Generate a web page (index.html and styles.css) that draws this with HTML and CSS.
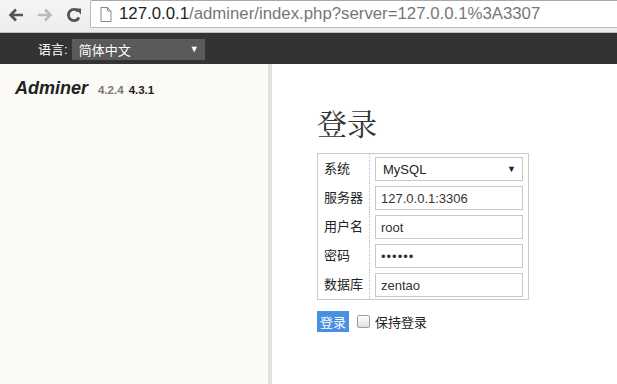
FILE: index.html
```html
<!DOCTYPE html>
<html lang="zh">
<head>
    <meta charset="UTF-8">
    <title>登录 - Adminer</title>
    <link rel="stylesheet" href="styles.css">
</head>
<body>
    <div class="chrome">
        <div class="nav-buttons">
            <svg class="nav-icon" width="18" height="18" viewBox="0 0 18 18"><path d="M16 9H4M9 3.5L3.5 9 9 14.5" fill="none" stroke="#555" stroke-width="2.6"/></svg>
            <svg class="nav-icon" width="18" height="18" viewBox="0 0 18 18"><path d="M2 9h12M9 3.5L14.5 9 9 14.5" fill="none" stroke="#bbb" stroke-width="2.6"/></svg>
            <svg class="nav-icon" width="18" height="18" viewBox="0 0 18 18"><path d="M14 11.5A5.6 5.6 0 1 1 13.2 5.2" fill="none" stroke="#555" stroke-width="2.8"/><path d="M10 2.5h6v6z" fill="#555"/></svg>
        </div>
        <div class="omnibox">
            <svg class="page-icon" width="12" height="15" viewBox="0 0 12 15"><path d="M1 .5h6.5l3.5 3.5v10.5H1z" fill="#fff" stroke="#888"/><path d="M7.5 .5V4H11" fill="none" stroke="#888"/></svg>
            <span class="host">127.0.0.1</span><span class="path">/adminer/index.php?server=127.0.0.1%3A3307</span>
        </div>
    </div>

    <div class="lang-bar">
        <label for="lang">语言:</label>
        <div class="lang-select">
            <span>简体中文</span>
            <span class="arrow">▼</span>
        </div>
    </div>

    <div class="page">
        <div class="menu">
            <h1><a href="#">Adminer</a> <span class="version">4.2.4</span> <span class="new-version">4.3.1</span></h1>
        </div>

        <div class="content">
            <h2>登录</h2>
            <form class="login">
                <table>
                    <tr>
                        <th>系统</th>
                        <td><div class="fake-select"><span>MySQL</span><span class="arrow">▼</span></div></td>
                    </tr>
                    <tr>
                        <th>服务器</th>
                        <td><input type="text" value="127.0.0.1:3306"></td>
                    </tr>
                    <tr>
                        <th>用户名</th>
                        <td><input type="text" value="root"></td>
                    </tr>
                    <tr>
                        <th>密码</th>
                        <td><input type="text" class="pass" value="••••••"></td>
                    </tr>
                    <tr>
                        <th>数据库</th>
                        <td><input type="text" value="zentao"></td>
                    </tr>
                </table>
                <div class="actions">
                    <button type="button">登录</button>
                    <label class="remember"><span class="checkbox"></span>保持登录</label>
                </div>
            </form>
        </div>
    </div>
</body>
</html>
```

FILE: styles.css
```css
body {
    margin: 0;
    font-family: "Liberation Sans", Arial, "Noto Sans CJK SC", sans-serif;
    font-size: 13px;
    color: #000;
    background: #fff;
    height: 384px;
    overflow: hidden;
    display: flex;
    flex-direction: column;
}
.chrome {
    height: 33px;
    box-sizing: border-box;
    background: linear-gradient(#f6f6f6, #ececec);
    border-bottom: 1px solid #bdbdbd;
    display: flex;
    align-items: flex-start;
    flex-shrink: 0;
}
.nav-buttons {
    display: flex;
    gap: 11px;
    padding: 6px 0 0 7px;
    width: 84px;
    box-sizing: border-box;
}
.omnibox {
    flex: 1;
    height: 28px;
    box-sizing: border-box;
    margin-left: 6px;
    border: 1px solid #b9b9b9;
    border-top-color: #a8a8a8;
    border-right: none;
    border-radius: 2px 0 0 2px;
    background: #fff;
    display: flex;
    align-items: center;
    padding-left: 9px;
    font-size: 16.8px;
    white-space: nowrap;
    overflow: hidden;
}
.page-icon {
    margin-right: 7px;
    flex-shrink: 0;
}
.host {
    color: #222;
}
.path {
    color: #777;
}
.lang-bar {
    height: 31px;
    background: #333;
    color: #fff;
    display: flex;
    align-items: center;
    padding-left: 38px;
    flex-shrink: 0;
}
.lang-bar label {
    font-size: 13px;
    margin-right: 4px;
}
.lang-select {
    width: 133px;
    height: 21px;
    box-sizing: border-box;
    background: #5a5a5a;
    display: flex;
    align-items: center;
    justify-content: space-between;
    padding: 0 6px 0 7px;
    font-size: 13px;
    margin-top: 1px;
}
.lang-select .arrow,
.fake-select .arrow {
    font-size: 9px;
}
.page {
    flex: 1;
    display: flex;
}
.menu {
    width: 268px;
    background: #fbfaf6;
    border-right: 4px solid #e4e2dc;
    flex-shrink: 0;
}
.menu h1 {
    margin: 14px 0 0 15px;
    font-size: 18px;
    font-weight: bold;
    font-style: italic;
}
.menu h1 a {
    color: #222;
    text-decoration: none;
}
.version {
    font-size: 11.5px;
    font-style: normal;
    color: #777;
    margin-left: 5px;
}
.new-version {
    font-size: 11.5px;
    font-style: normal;
    color: #222;
}
.content {
    padding-left: 45px;
}
h2 {
    margin: 40px 0 13px 0;
    font-family: "Noto Serif CJK SC", "Liberation Serif", "Noto Sans CJK SC", serif;
    font-size: 30px;
    font-weight: normal;
    color: #333;
    line-height: 36px;
}
table {
    border: 1px solid #ccc;
    border-collapse: collapse;
    width: 211px;
}
th {
    text-align: left;
    font-weight: normal;
    font-family: "Noto Sans CJK SC", sans-serif;
    font-size: 13px;
    color: #222;
    padding: 0 6px 3px;
    border-right: 1px dotted #bbb;
    height: 26px;
    vertical-align: middle;
    white-space: nowrap;
    width: 38px;
}
td {
    padding: 3px 5px 2px;
    height: 24px;
}
input[type="text"],
.fake-select {
    width: 148px;
    height: 24px;
    box-sizing: border-box;
    border: 1px solid #c8c8c8;
    padding: 0 5px;
    margin: 0;
    font-family: "Liberation Sans", Arial, sans-serif;
    font-size: 13px;
    color: #333;
    display: block;
}
.pass {
    font-size: 7px;
    letter-spacing: 1px;
}
.fake-select {
    display: flex;
    align-items: center;
    justify-content: space-between;
    padding: 0 6px 0 7px;
    color: #222;
}
.actions {
    display: flex;
    align-items: center;
    margin-top: 11px;
}
button {
    background: #4a90e2;
    color: #fff;
    border: none;
    font-family: "Noto Sans CJK SC", sans-serif;
    font-size: 13px;
    height: 21px;
    width: 32px;
    padding: 0;
}
.remember {
    display: flex;
    align-items: center;
    margin-left: 8px;
    font-family: "Noto Sans CJK SC", sans-serif;
    font-size: 13px;
    color: #222;
}
.checkbox {
    width: 11px;
    height: 11px;
    border: 1px solid #a0a0a0;
    border-radius: 2px;
    background: linear-gradient(#fff, #e0e0e0);
    margin-right: 5px;
}
```
